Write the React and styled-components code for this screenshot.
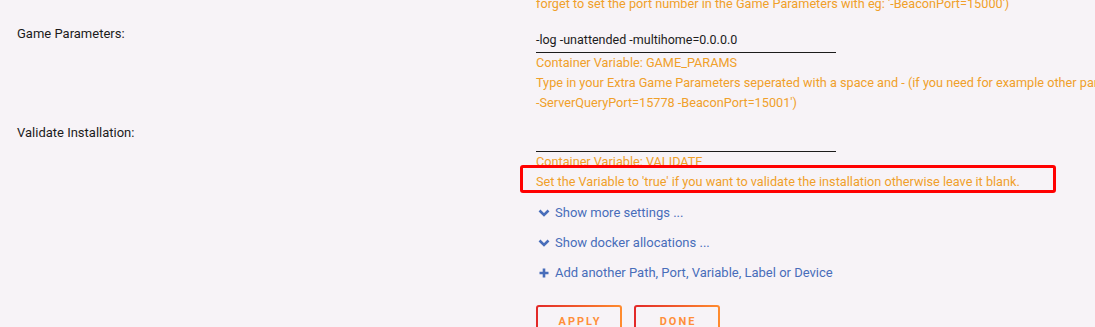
import styled, { createGlobalStyle } from "styled-components";

const GlobalStyle = createGlobalStyle`
	html, body {
		margin: 0;
		background: #f7f3f7;
	}
	body {
		font-family: Roboto, "Liberation Sans", sans-serif;
		color: #1c1b1b;
	}
`;

const Page = styled.div`
	padding: 0 0 0 17px;
	margin-top: -6px;
	overflow: hidden;
`;

const Setting = styled.div`
	display: grid;
	grid-template-columns: 519px 1fr;
	align-items: start;
	margin-bottom: 13px;
`;

const Label = styled.div`
	font-size: 13px;
	line-height: 14px;
	color: #1c1b1b;
`;

const Value = styled.div`
	display: flex;
	flex-direction: column;
	align-items: flex-start;
	min-width: 0;
`;

const Input = styled.div`
	box-sizing: border-box;
	width: 300px;
	height: 26px;
	font-size: 12.5px;
	line-height: 24px;
	padding-top: 1px;
	border-bottom: 1px solid #1c1b1b;
	white-space: nowrap;
`;

const Note = styled.div`
	font-size: 12.7px;
	line-height: 20px;
	color: #f0a02a;
	white-space: nowrap;
	position: relative;
	${(p) =>
		p.$marked &&
		`
		&::after {
			content: "";
			position: absolute;
			left: -16px;
			top: -7px;
			width: 536px;
			height: 28px;
			box-sizing: border-box;
			border: 3px solid #ff0000;
			border-radius: 3px;
			pointer-events: none;
		}
	`}
`;

const Actions = styled.div`
	padding-left: 519px;
	display: flex;
	flex-direction: column;
	gap: 10px;
	margin-top: -2px;
`;

const Toggle = styled.a`
	display: flex;
	align-items: center;
	gap: 5px;
	font-size: 13px;
	line-height: 20px;
	color: #486dba;
	cursor: pointer;
	svg {
		width: 12px;
		height: 12px;
		margin-left: 2px;
		flex: none;
	}
`;

const Buttons = styled.div`
	display: flex;
	gap: 12px;
	padding-left: 519px;
	margin-top: 22px;
`;

const Button = styled.button`
	box-sizing: border-box;
	width: 86px;
	height: 33px;
	border: 2px solid transparent;
	border-radius: 3px;
	background: linear-gradient(#f7f3f7, #f7f3f7) padding-box,
		linear-gradient(90deg, #e22828, #ff8c2f) border-box;
	color: #ff8f3a;
	font-family: Roboto, "Liberation Sans", sans-serif;
	font-size: 11px;
	font-weight: 700;
	letter-spacing: 2px;
	text-transform: uppercase;
	padding: 0 0 0 2px;
	cursor: pointer;
`;

const Chevron = () => (
	<svg viewBox="0 0 12 12">
		<path d="M1.5 3.5 L6 8 L10.5 3.5" fill="none" stroke="currentColor" strokeWidth="2.6" strokeLinecap="butt" />
	</svg>
);

const Plus = () => (
	<svg viewBox="0 0 12 12">
		<path d="M6 1.5 V10.5 M1.5 6 H10.5" fill="none" stroke="currentColor" strokeWidth="2.6" />
	</svg>
);

export default function App() {
	return (
		<>
			<GlobalStyle />
			<Page>
				<Setting>
					<span />
					<Value>
						<Note>forget to set the port number in the Game Parameters with eg: '-BeaconPort=15000')</Note>
					</Value>
				</Setting>
				<Setting>
					<Label>Game Parameters:</Label>
					<Value>
						<Input>-log -unattended -multihome=0.0.0.0</Input>
						<Note>Container Variable: GAME_PARAMS</Note>
						<Note>
							Type in your Extra Game Parameters seperated with a space and - (if you need for example other parameters like
						</Note>
						<Note>-ServerQueryPort=15778 -BeaconPort=15001')</Note>
					</Value>
				</Setting>
				<Setting>
					<Label>Validate Installation:</Label>
					<Value>
						<Input />
						<Note>Container Variable: VALIDATE</Note>
						<Note $marked>
							Set the Variable to 'true' if you want to validate the installation otherwise leave it blank.
						</Note>
					</Value>
				</Setting>
				<Actions>
					<Toggle>
						<Chevron />
						Show more settings ...
					</Toggle>
					<Toggle>
						<Chevron />
						Show docker allocations ...
					</Toggle>
					<Toggle>
						<Plus />
						Add another Path, Port, Variable, Label or Device
					</Toggle>
				</Actions>
				<Buttons>
					<Button>Apply</Button>
					<Button>Done</Button>
				</Buttons>
			</Page>
		</>
	);
}
